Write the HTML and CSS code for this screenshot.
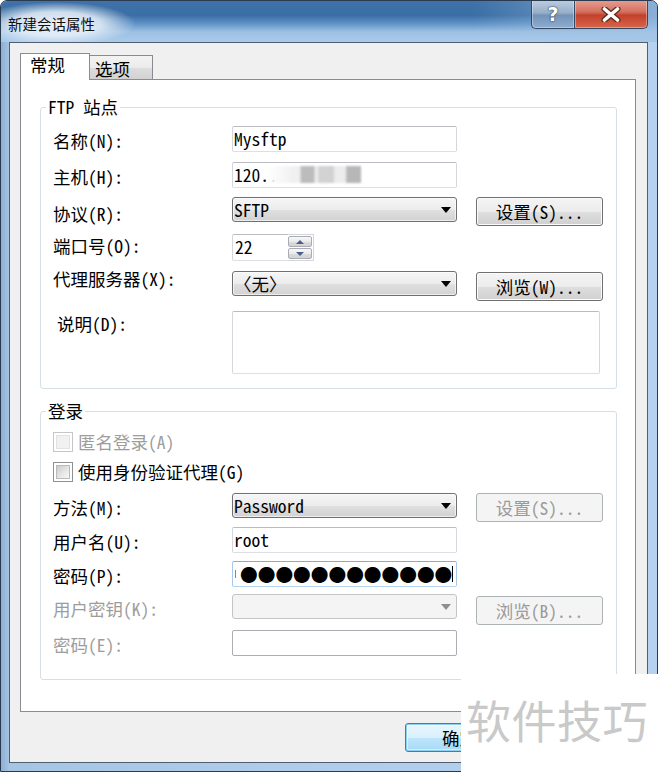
FILE: index.html
```html
<!DOCTYPE html>
<html lang="zh-CN">
<head>
<meta charset="utf-8">
<title>新建会话属性</title>
<link rel="stylesheet" href="styles.css">
</head>
<body>
<div class="window">
  <div class="titlebar">
    <span class="title">新建会话属性</span>
    <div class="caption">
      <span class="cap-btn help">?</span>
      <span class="cap-btn close">
        <svg width="20" height="15" viewBox="0 0 20 15" aria-hidden="true">
          <path d="M3.5 2 L16.5 13 M16.5 2 L3.5 13" stroke="#5a2a22" stroke-width="6" stroke-linecap="round"/>
          <path d="M3.5 2 L16.5 13 M16.5 2 L3.5 13" stroke="#ffffff" stroke-width="3.6" stroke-linecap="round"/>
        </svg>
      </span>
    </div>
  </div>

  <div class="client">
    <div class="tabs">
      <span class="tab tab-active">常规</span>
      <span class="tab tab-idle">选项</span>
    </div>

    <div class="panel">
      <fieldset class="group">
        <legend>FTP 站点</legend>
        <div class="form form-site">
          <span class="lbl">名称(N):</span>
          <div class="input"><span>Mysftp</span></div>
          <span></span>

          <span class="lbl">主机(H):</span>
          <div class="input host"><span>120..</span><span class="smudge"></span></div>
          <span></span>

          <span class="lbl lbl-low">协议(R):</span>
          <div class="combo"><span>SFTP</span></div>
          <div class="btn">设置(S)...</div>

          <span class="lbl lbl-mid">端口号(O):</span>
          <div class="spin">
            <div class="input spin-text"><span>22</span></div>
            <div class="spin-btns">
              <span class="spin-btn up"></span>
              <span class="spin-btn down"></span>
            </div>
          </div>
          <span></span>

          <span class="lbl lbl-high">代理服务器(X):</span>
          <div class="combo"><span>〈无〉</span></div>
          <div class="btn btn-low">浏览(W)...</div>

          <span class="lbl lbl-note">说明(D):</span>
          <div class="input memo"></div>
        </div>
      </fieldset>

      <fieldset class="group group-login">
        <legend>登录</legend>
        <div class="form form-login">
          <div class="check disabled"><span class="box"></span><span>匿名登录(A)</span></div>
          <div class="check"><span class="box"></span><span>使用身份验证代理(G)</span></div>

          <span class="lbl">方法(M):</span>
          <div class="combo"><span>Password</span></div>
          <div class="btn disabled">设置(S)...</div>

          <span class="lbl">用户名(U):</span>
          <div class="input"><span>root</span></div>
          <span></span>

          <span class="lbl">密码(P):</span>
          <div class="input focus"><span class="tick"></span><span class="dots">●●●●●●●●●●●●</span><span class="caret"></span></div>
          <span></span>

          <span class="lbl disabled">用户密钥(K):</span>
          <div class="combo disabled"></div>
          <div class="btn disabled btn-low2">浏览(B)...</div>

          <span class="lbl disabled">密码(E):</span>
          <div class="input plain"></div>
          <span></span>
        </div>
      </fieldset>
    </div>

    <div class="actions">
      <div class="btn btn-wide btn-default">确定</div>
    </div>
  </div>
</div>

<div class="watermark">软件技巧</div>
</body>
</html>
```

FILE: styles.css
```css
* { box-sizing: border-box; }

html, body {
  margin: 0;
  padding: 0;
  background: #ffffff;
}

body {
  position: relative;
  width: 658px;
  height: 773px;
  overflow: hidden;
  font-family: "Noto Sans Mono CJK SC", "Noto Sans CJK SC", monospace;
  font-size: 17.5px;
  color: #000;
}

/* ---------- window frame ---------- */
.window {
  width: 658px;
  height: 772px;
  border: 1px solid #2b3b4f;
  border-radius: 7px 7px 0 0;
  background: linear-gradient(to right, #8eb0d3 0, #a6c4e3 8px, #aecbea 40%, #b5d3f1 100%);
  display: flex;
  flex-direction: column;
  overflow: hidden;
}

.titlebar {
  height: 41px;
  flex: none;
  display: flex;
  justify-content: space-between;
  align-items: flex-start;
  background:
    radial-gradient(ellipse 80px 22px at 55px 23px, rgba(238,244,251,.97) 0%, rgba(232,240,249,.85) 55%, rgba(232,240,249,0) 100%),
    linear-gradient(to right, rgba(170,200,232,0) 72%, rgba(165,197,230,.75) 100%),
    linear-gradient(to bottom, #3f72a8 0%, #3a6ea5 35%, #5f92c5 55%, #9cc0e3 75%, #aacbeb 100%);
}

.title {
  font-family: "Noto Sans CJK SC", sans-serif;
  font-size: 14.5px;
  line-height: 20px;
  margin: 13px 0 0 7px;
  color: #111;
}

.caption {
  display: flex;
  margin: -1px 9px 0 0;
}

.cap-btn {
  height: 29px;
  display: flex;
  align-items: center;
  justify-content: center;
  border: 1px solid #34475f;
  border-top: none;
  box-shadow: inset 0 0 0 1px rgba(255,255,255,.35);
}

.help {
  width: 43px;
  border-right: none;
  border-radius: 0 0 0 5px;
  background: linear-gradient(to bottom, #bccde0 0%, #98afc9 45%, #7393b8 55%, #8dadd0 100%);
  color: #fff;
  font-family: "DejaVu Sans", sans-serif;
  font-weight: bold;
  font-size: 19px;
  line-height: 20px;
  text-shadow: 0 0 1px #2a3b52, 0 0 2px #2a3b52;
}

.close {
  width: 74px;
  border-radius: 0 0 5px 0;
  background: linear-gradient(to bottom, #e6a092 0%, #d4705f 42%, #c3412c 55%, #d7664a 100%);
}

/* ---------- client area ---------- */
.client {
  flex: 1;
  margin: 0 9px 8px 8px;
  border: 1px solid #4f5f70;
  background: #f0f0f0;
  padding: 10px 11px 0 10px;
  display: flex;
  flex-direction: column;
}

.tabs {
  height: 26px;
  display: flex;
  align-items: flex-end;
  position: relative;
  z-index: 1;
}

.tab {
  font-size: 17.5px;
  line-height: 20px;
  border: 1px solid #898c95;
  border-bottom: none;
}

.tab-active {
  width: 70px;
  height: 27px;
  margin-bottom: -1px;
  padding: 1px 0 0 9px;
  background: #ffffff;
  position: relative;
  z-index: 1;
}

.tab-idle {
  width: 64px;
  height: 24px;
  margin-left: -1px;
  padding: 3px 0 0 5px;
  background: linear-gradient(to bottom, #f3f3f3 0%, #ebebeb 50%, #dddddd 51%, #d2d2d2 100%);
}

.panel {
  height: 633px;
  flex: none;
  border: 1px solid #898c95;
  background: #ffffff;
  padding: 17px 18px 0 19px;
}

/* ---------- group boxes ---------- */
.group {
  margin: 0;
  min-width: 0;
  border: 1px solid #d5dfe5;
  border-radius: 3px;
  padding: 9px 12px 15px 12px;
}

.group legend {
  margin-left: -7px;
  padding: 0 2px;
  font-size: 17.5px;
  line-height: 20px;
}

.group-login {
  margin-top: 12px;
  padding: 11px 12px 22px 12px;
}

.form {
  display: grid;
  grid-template-columns: 160px 225px 127px;
  column-gap: 19px;
  align-items: start;
}

.form-site  { grid-template-rows: 36px 35px 37px 37px 40px 62px; }
.form-login { grid-template-rows: 30px 31px 34px 34px 33px 36px 27px; }

.lbl {
  line-height: 26px;
  margin-top: 2px;
  white-space: nowrap;
}
.lbl-low  { margin-top: 4px; }
.lbl-mid  { margin-top: -1px; }
.lbl-high { margin-top: -5px; }
.lbl-note { margin-top: 0; padding-left: 4px; }
.lbl.disabled { color: #9d9d9d; }

/* ---------- controls ---------- */
.input {
  height: 26px;
  border: 1px solid;
  border-color: #b9bcc1 #d3d6db #dcdfe3 #d3d6db;
  border-radius: 2px;
  background: #ffffff;
  padding: 0 1px;
  line-height: 24px;
  white-space: nowrap;
  overflow: hidden;
}

.host { position: relative; }

.smudge {
  position: absolute;
  left: 35px;
  top: 3px;
  width: 93px;
  height: 17px;
  background: linear-gradient(to right,
    rgba(255,255,255,.9) 0%, #f1f1f1 26%, #efefef 34%,
    #bcbcbc 36%, #bcbcbc 49%, #ececec 51%, #ececec 53%,
    #d2d2d2 55%, #d2d2d2 70%, #ededed 72%, #ededed 83%,
    #b7b7b7 85%, #b7b7b7 100%);
  filter: blur(1.2px);
}

.plain { border-color: #abadb3; }

.focus {
  border-color: #7eaedb #a7c8e8 #b5d3ee #a7c8e8;
  display: flex;
  align-items: center;
  padding-left: 2px;
}

.tick {
  width: 1px;
  height: 8px;
  background: #8a8a8a;
  margin-right: 4px;
}

.dots {
  font-family: "Noto Sans CJK SC", sans-serif;
  font-size: 17.7px;
  line-height: 24px;
}

.caret {
  width: 1px;
  height: 16px;
  background: #000;
}

.memo {
  grid-column: 2 / 4;
  width: 368px;
  height: 63px;
}

.combo {
  height: 25px;
  border: 1px solid #707070;
  border-radius: 3px;
  background: linear-gradient(to bottom, #f6f6f6 0%, #ececec 50%, #e0e0e0 51%, #d2d2d2 100%);
  box-shadow: inset 0 0 0 1px rgba(255,255,255,.6);
  display: flex;
  align-items: center;
  padding-left: 1px;
  line-height: 23px;
  white-space: nowrap;
}

.combo::after {
  content: "";
  margin-left: auto;
  margin-right: 5px;
  border-left: 5px solid transparent;
  border-right: 5px solid transparent;
  border-top: 6px solid #000;
}

.combo.disabled {
  background: #f4f4f4;
  border-color: #c4c4c4;
  box-shadow: none;
}
.combo.disabled::after { border-top-color: #8f8f8f; }

.btn {
  height: 29px;
  border: 1px solid #707070;
  border-radius: 3px;
  background: linear-gradient(to bottom, #f4f4f4 0%, #ececec 50%, #dedede 51%, #d0d0d0 100%);
  box-shadow: inset 0 0 0 1px #fbfbfb;
  display: flex;
  align-items: center;
  justify-content: center;
  white-space: nowrap;
}

.btn-low  { margin-top: 1px; }
.btn-low2 { margin-top: 2px; }

.btn.disabled {
  background: #f4f4f4;
  border-color: #adb2b5;
  box-shadow: none;
  color: #9a9a9a;
}

/* spin box */
.spin {
  display: flex;
  height: 27px;
}

.spin-text {
  width: 56px;
  height: 27px;
  border-right: none;
  border-radius: 2px 0 0 2px;
  padding-left: 2px;
}

.spin-btns {
  width: 26px;
  height: 27px;
  border: 1px solid #d3d6db;
  border-left: none;
  background: #ffffff;
  padding: 1px 1px 1px 0;
  display: flex;
  flex-direction: column;
  gap: 1px;
}

.spin-btn {
  flex: 1;
  border: 1px solid #a9adb3;
  border-radius: 2px;
  background: linear-gradient(to bottom, #f7f7f7 0%, #ebebeb 50%, #dcdcdc 51%, #d3d3d3 100%);
  display: flex;
  align-items: center;
  justify-content: center;
}

.spin-btn.up::after {
  content: "";
  border-left: 4px solid transparent;
  border-right: 4px solid transparent;
  border-bottom: 4px solid #4c5f86;
}

.spin-btn.down::after {
  content: "";
  border-left: 4px solid transparent;
  border-right: 4px solid transparent;
  border-top: 4px solid #4c5f86;
}

/* checkboxes */
.check {
  grid-column: 1 / -1;
  display: flex;
  align-items: center;
  line-height: 20px;
  height: 20px;
  white-space: nowrap;
}

.check .box {
  width: 20px;
  height: 20px;
  margin-right: 5px;
  border: 1px solid #8e8f8f;
  background: #fff;
  padding: 2px;
  display: flex;
}

.check .box::before {
  content: "";
  flex: 1;
  background: linear-gradient(135deg, #c9cbcd 0%, #e6e6e6 55%, #f6f6f6 100%);
  border: 1px solid #b8babc;
}

.check.disabled { color: #9d9d9d; }
.check.disabled .box { border-color: #c6c6c6; }
.check.disabled .box::before {
  background: #f1f1f1;
  border-color: #e2e2e2;
}

/* ---------- bottom buttons ---------- */
.actions {
  display: flex;
  justify-content: flex-start;
  margin-top: 11px;
  padding-left: 385px;
}

.btn-wide { width: 109px; }

.btn-default {
  border-color: #3c7fb1;
  background: linear-gradient(to bottom, #eaf6fd 0%, #d9f0fc 50%, #bee6fd 51%, #a7d9f5 100%);
  box-shadow: inset 0 0 0 1px #8ccff0, inset 0 0 0 2px rgba(255,255,255,.5);
}

/* ---------- watermark overlay ---------- */
.watermark {
  position: absolute;
  left: 461px;
  top: 674px;
  width: 197px;
  height: 99px;
  background: #ffffff;
  color: #c9c9c9;
  font-family: "Noto Sans CJK SC", sans-serif;
  font-size: 45px;
  line-height: 45px;
  padding: 23px 0 0 5px;
  letter-spacing: 0.5px;
  white-space: nowrap;
}
```
